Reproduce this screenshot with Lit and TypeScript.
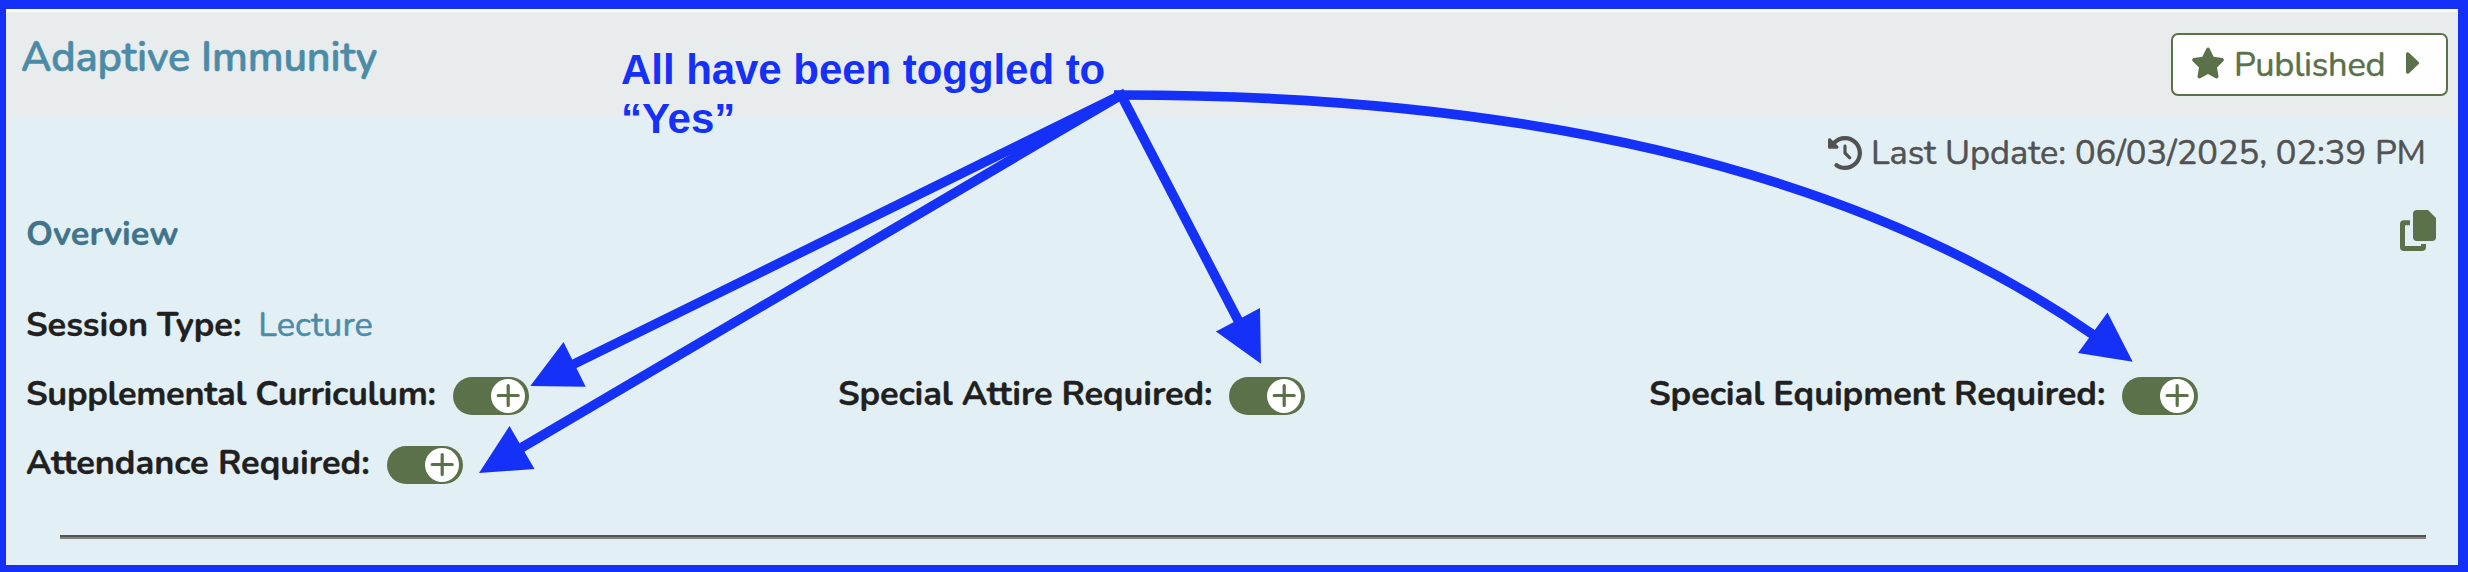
import { LitElement, html, css, svg } from "lit";
import { customElement, property } from "lit/decorators.js";

@customElement("yes-toggle")
export class YesToggle extends LitElement {
  static styles = css`
    :host { display: block; margin-top: 4px; }
    .track { box-sizing: border-box; width: 76px; height: 38px; border-radius: 19px; background: #5a7149; padding: 2px; display: flex; justify-content: flex-end; }
    .thumb { display: block; width: 34px; height: 34px; margin-right: 2px; }
  `;
  render() {
    return html`<div class="track"><svg class="thumb" viewBox="0 0 34 34">
      <circle cx="17" cy="17" r="17" fill="#fff"></circle>
      <path d="M7.2 16.5H27.2M17.2 6.5V26.5" stroke="#5a7149" stroke-width="3.2" stroke-linecap="round"></path>
    </svg></div>`;
  }
}

@customElement("session-field")
export class SessionField extends LitElement {
  @property() label = "";
  @property() value = "";
  static styles = css`
    :host { display: flex; align-items: center; height: 69px; white-space: nowrap; letter-spacing: -0.1px; }
    .label { font-weight: 700; color: #211f20; -webkit-text-stroke: 0.3px; }
    .value { color: #4c8ba7; margin-left: 17px; letter-spacing: 0; -webkit-text-stroke: 0.5px; }
    .toggle { margin-left: 17px; }
  `;
  render() {
    return html`<span class="label">${this.label}:</span>
      ${this.value ? html`<span class="value">${this.value}</span>` : html`<yes-toggle class="toggle"></yes-toggle>`}`;
  }
}

const BLUE = "#1531f8";
const arrows = svg`
  <g fill="none" stroke=${BLUE} stroke-width="9.6">
    <path d="M1121 95L572 365"></path>
    <path d="M1121 95L521 448"></path>
    <path d="M1119 91L1240 324"></path>
    <path d="M1114 95H1121Q1750 95 2095 336"></path>
  </g>
  <g fill=${BLUE}>
    <path d="M530.3 386L563.5 342L585.7 386.7Z"></path>
    <path d="M479 473L509.5 426L534.5 469Z"></path>
    <path d="M1261 363.7L1260 308L1216 331.5Z"></path>
    <path d="M2132.7 361.7L2107.5 312.5L2078 353Z"></path>
  </g>`;

@customElement("app-root")
export class AppRoot extends LitElement {
  static styles = css`
    :host { display: block; position: relative; box-sizing: border-box; width: 2468px; height: 572px; overflow: hidden;
      border: solid #1531f8; border-width: 9px 10px 7px 6px; background: #fff; padding-top: 3px;
      font-family: "Nunito", "Lato", sans-serif; font-size: 34.4px; line-height: 48px; }
    .page { background: #e8ecec; height: 553px; display: flex; flex-direction: column; }
    .header { height: 105px; box-sizing: border-box; display: flex; justify-content: space-between; align-items: flex-start; padding: 21px 10px 0 15px; }
    .title { margin: 0; font-size: 41.4px; font-weight: 600; color: #4c8ba7; line-height: 50px; white-space: nowrap; letter-spacing: -0.12px; -webkit-text-stroke: 0.6px; }
    .status { box-sizing: border-box; width: 277px; height: 63px; border: 2px solid #5a7149; border-radius: 7px; background: #fff; color: #5a7149; display: flex; align-items: center; padding-left: 19px; }
    .status-text { letter-spacing: -0.25px; -webkit-text-stroke: 0.5px; }
    .star { width: 32px; height: 32px; margin-right: 10px; margin-top: -3px; }
    .caret { width: 13px; height: 22px; margin-left: 21px; margin-top: -3px; }
    .panel { flex: 1; margin-left: 3px; background: #e2f0f6; padding: 0 32px 0 17px; }
    .updated { display: flex; justify-content: flex-end; align-items: center; height: 48px; margin-top: 12px; color: #525252; white-space: nowrap; letter-spacing: -0.03px; -webkit-text-stroke: 0.5px; }
    .clock { width: 34px; height: 34px; margin: -1px 9px 0 0; }
    .overview { display: flex; justify-content: space-between; align-items: center; height: 48px; margin: 33px -10px 0 0; }
    .subtitle { margin: 0; font-size: 34.4px; font-weight: 700; color: #41748b; -webkit-text-stroke: 0.3px; }
    .copy { width: 36px; height: 41px; margin-top: -7px; }
    .fields { display: grid; grid-template-columns: 812px 811px 1fr; grid-auto-rows: 69.2px; margin-top: 32px; }
    .wide { grid-column: 1 / -1; }
    .snug { letter-spacing: -0.34px; }
    .close { letter-spacing: -0.16px; }
    .loose { letter-spacing: -0.05px; }
    .rule { margin: 37.4px 0 0 34px; height: 2px; border-bottom: 2px solid #808080; background: #525252; }
    .note { position: absolute; left: 615px; top: 36px; color: #1531f8; font: bold 42px/49px "Liberation Sans", Arial, sans-serif; letter-spacing: -0.05px; white-space: nowrap; }
    .arrows { position: absolute; left: -6px; top: -9px; width: 2468px; height: 572px; }
  `;
  render() {
    return html`
      <div class="page">
        <header class="header">
          <h1 class="title">Adaptive Immunity</h1>
          <div class="status">
            <svg class="star" viewBox="22 0 532 512" fill="#5a7149"><path d="M316.900 18C311.600 7 300.400 0 288.100 0s-23.400 7-28.800 18L195 150.300 51.400 171.500c-12 1.800-22 10.200-25.700 21.700s-.7 24.200 7.900 32.700L137.800 329 113.200 474.700c-2 12 3 24.200 12.900 31.300s23 8 33.800 2.300l128.300-68.500 128.300 68.500c10.800 5.700 23.900 4.900 33.800-2.300s14.900-19.300 12.900-31.300L438.500 329 542.700 225.900c8.600-8.500 11.700-21.200 7.900-32.700s-13.700-19.900-25.700-21.700L381.200 150.300 316.900 18z"></path></svg>
            <span class="status-text">Published</span>
            <svg class="caret" viewBox="0 0 13 22" fill="#5a7149"><path d="M0 2C0 .3 1.700-.4 3 .8L12.400 9.700C13.200 10.500 13.200 11.500 12.400 12.300L3 21.200C1.700 22.400 0 21.700 0 20Z"></path></svg>
          </div>
        </header>
        <section class="panel">
          <div class="updated">
            <svg class="clock" viewBox="0 0 512 512" fill="#525252"><path d="M75 75L41 41C25.900 25.900 0 36.600 0 57.900V168c0 13.300 10.700 24 24 24H134.100c21.400 0 32.100-25.900 17-41l-30.800-30.800C155 85.500 203 64 256 64c106 0 192 86 192 192s-86 192-192 192c-40.800 0-78.600-12.700-109.700-34.400-14.500-10.100-34.400-6.600-44.600 7.900s-6.600 34.400 7.900 44.600C151.200 495 201.700 512 256 512c141.400 0 256-114.600 256-256S397.400 0 256 0C185.300 0 121.300 28.700 75 75zm181 53c-13.300 0-24 10.700-24 24V256c0 6.400 2.500 12.500 7 17l72 72c9.400 9.400 24.600 9.400 33.900 0s9.400-24.600 0-33.900l-65-65V152c0-13.300-10.700-24-24-24z"></path></svg>
            <span>Last Update: 06/03/2025, 02:39 PM</span>
          </div>
          <div class="overview">
            <h2 class="subtitle">Overview</h2>
            <svg class="copy" viewBox="0 0 36 41" fill="#5a7149"><path d="M17 0H28L36 8V27Q36 31 32 31H17Q13 31 13 27V4Q13 0 17 0Z"></path><path d="M10 10.300H4Q0 10.300 0 14.300V37Q0 41 4 41H22Q26 41 26 37V34H21V36H5V15.300H10Z"></path></svg>
          </div>
          <div class="fields">
            <session-field class="wide" label="Session Type" value="Lecture"></session-field>
            <session-field class="snug" label="Supplemental Curriculum"></session-field>
            <session-field class="close" label="Special Attire Required"></session-field>
            <session-field label="Special Equipment Required"></session-field>
            <session-field class="loose" label="Attendance Required"></session-field>
          </div>
          <div class="rule"></div>
        </section>
      </div>
      <div class="note">All have been toggled to<br>“Yes”</div>
      <svg class="arrows" viewBox="0 0 2468 572">${arrows}</svg>
    `;
  }
}
